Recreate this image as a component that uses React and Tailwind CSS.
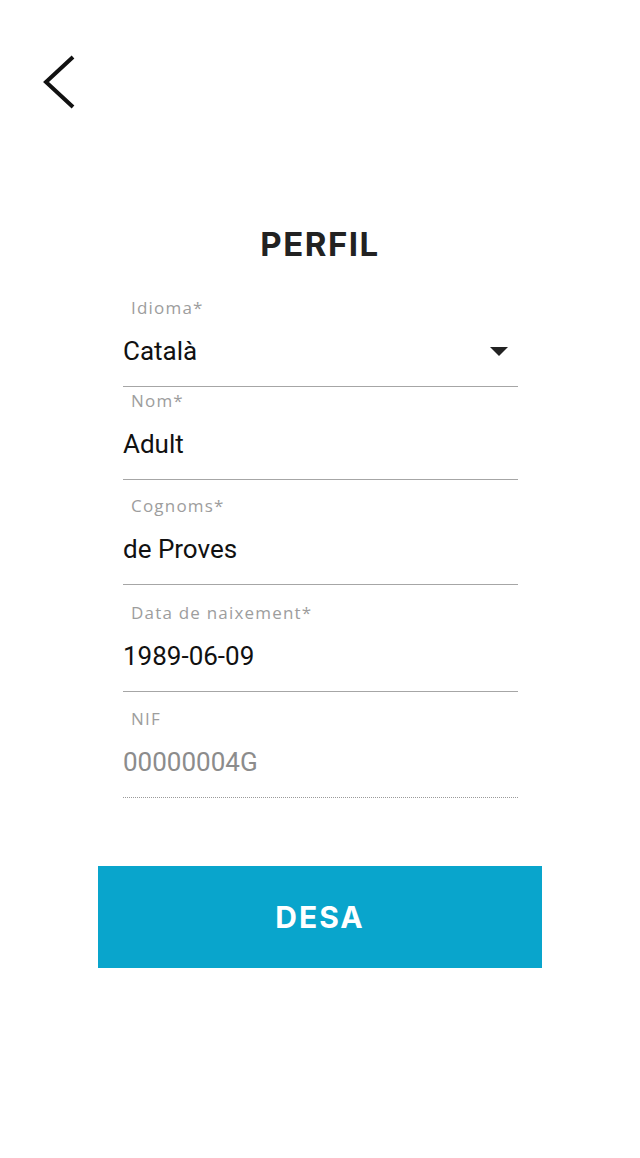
import React from 'react';

function Field({ label, value, muted = false, dotted = false, dropdown = false, className = '' }) {
  return (
    <div className={className}>
      <div className="pl-2 text-[17px] leading-[20px] tracking-[1.2px] text-[#9d9d9d] font-['Open_Sans','Liberation_Sans',sans-serif]">{label}</div>
      <div className="mt-[17px] flex items-center justify-between h-[32px]">
        <span className={`text-[26px] leading-[32px] font-['Roboto','Liberation_Sans',sans-serif] ${muted ? 'text-[#8c8c8c]' : 'text-[#111]'}`}>
          {value}
        </span>
        {dropdown && (
          <svg width="18" height="9" viewBox="0 0 18 9" className="mr-[10px]">
            <path d="M0 0 L18 0 L9 9 Z" fill="#222" />
          </svg>
        )}
      </div>
      <div className={`mt-[19px] ${dotted ? 'border-b border-dotted border-[#9a9a9a]' : 'border-b border-[#a6a6a6]'}`} />
    </div>
  );
}

export default function App() {
  return (
    <div className="w-[640px] h-[1158px] bg-white relative overflow-hidden">
      <div className="pt-[55px] pl-[42px]">
        <svg width="34" height="54" viewBox="0 0 34 54">
          <path d="M31 2 L4 27 L31 52" fill="none" stroke="#111" strokeWidth="4" />
        </svg>
      </div>

      <h1 className="mt-[115px] text-center text-[33px] leading-[40px] font-bold text-[#222] font-['Inter','Liberation_Sans',sans-serif] tracking-[1.5px]">
        PERFIL
      </h1>

      <div className="mx-[123px] mt-[34px] w-[395px]">
        <Field label="Idioma*" value="Català" dropdown />
        <Field label="Nom*" value="Adult" className="mt-[4px]" />
        <Field label="Cognoms*" value="de Proves" className="mt-[16px]" />
        <Field label="Data de naixement*" value="1989-06-09" className="mt-[18px]" />
        <Field label="NIF" value="00000004G" muted dotted className="mt-[17px]" />
      </div>

      <div className="mt-[68px] mx-[98px]">
        <button className="w-[444px] h-[102px] bg-[#09a5cc] text-white text-[30px] font-bold font-['Inter','Liberation_Sans',sans-serif] tracking-[2px]">
          DESA
        </button>
      </div>
    </div>
  );
}
